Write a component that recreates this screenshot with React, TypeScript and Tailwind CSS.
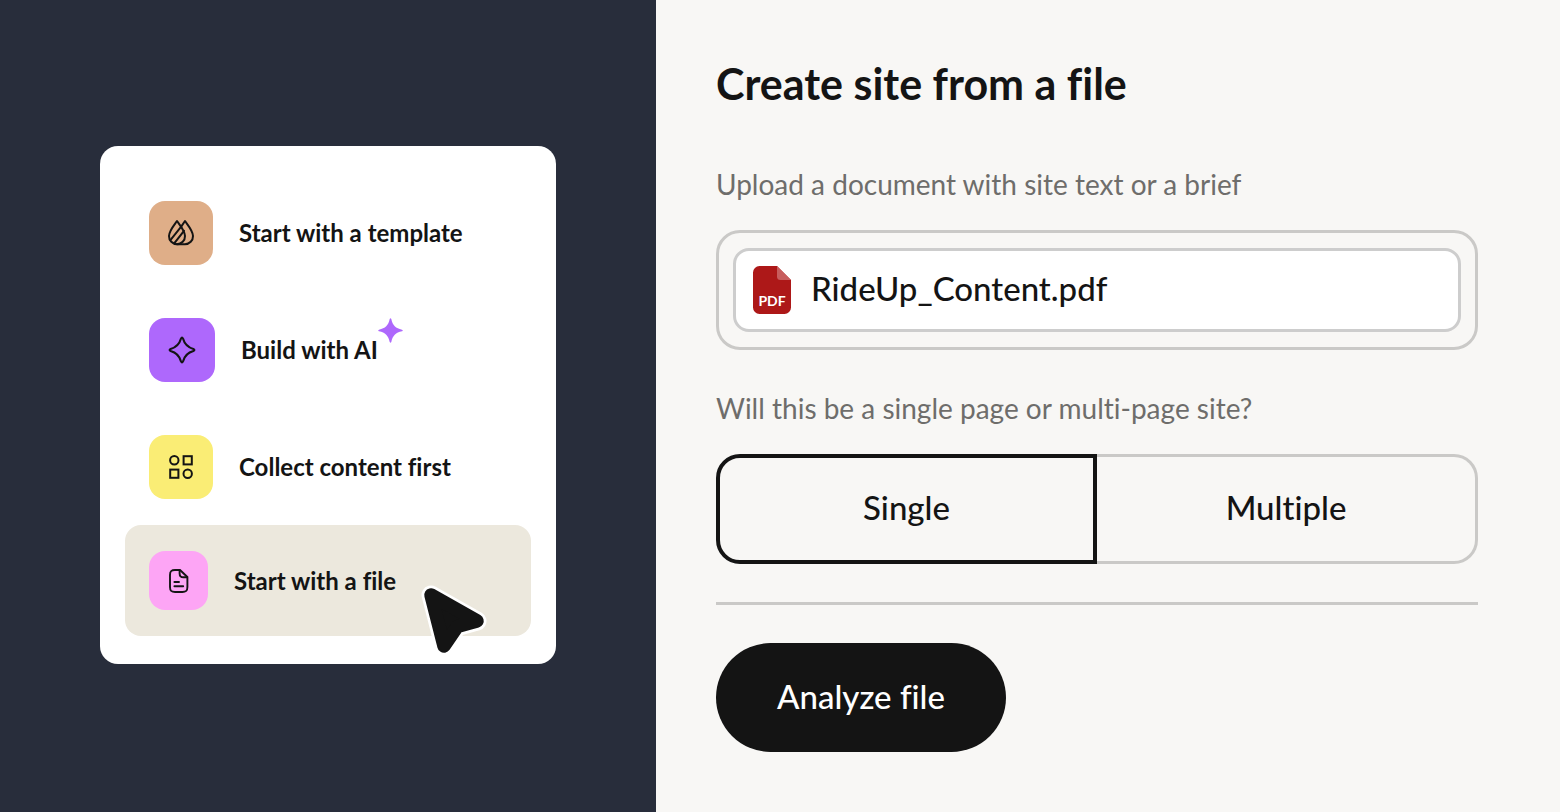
import { useState } from "react";
import type { ReactNode } from "react";

function DropsIcon() {
  return (
    <svg width="28" height="28" viewBox="0 0 28 28" fill="none" stroke="#141414" strokeWidth="2" strokeLinecap="round" strokeLinejoin="round" aria-hidden="true">
      <path d="M10 2 C7 6.2 2 12 2 17 A8 8 0 0 0 10 25.2 A8 8 0 0 0 18 17 C18 12 13 6.2 10 2 Z" />
      <path d="M14.2 7.6 L18 2 C21 6.2 26 12 26 17 A8 8 0 0 1 18 25.2 H10" />
      <path d="M3.6 20.8 L14 7.8" />
      <path d="M7.4 24.2 L17 11.8" />
    </svg>
  );
}

function SparkIcon() {
  return (
    <svg width="30" height="30" viewBox="0 0 30 30" fill="none" stroke="#141414" strokeWidth="2.1" strokeLinejoin="round" aria-hidden="true">
      <path d="M14 3.6 Q15 1.6 16 3.6 C17.6 9.5 20.5 12.4 26.4 14 Q28.4 15 26.4 16 C20.5 17.6 17.6 20.5 16 26.4 Q15 28.4 14 26.4 C12.4 20.5 9.5 17.6 3.6 16 Q1.6 15 3.6 14 C9.5 12.4 12.4 9.5 14 3.6 Z" />
    </svg>
  );
}

function ShapesIcon() {
  return (
    <svg width="26" height="26" viewBox="0 0 26 26" fill="none" stroke="#141414" strokeWidth="2" aria-hidden="true">
      <circle cx="6.3" cy="6.3" r="4.2" />
      <rect x="15.6" y="2.2" width="8.2" height="8.2" />
      <rect x="2.2" y="15.6" width="8.2" height="8.2" />
      <circle cx="19.7" cy="19.7" r="4.2" />
    </svg>
  );
}

function FileIcon() {
  return (
    <svg width="22" height="26" viewBox="0 0 22 26" fill="none" stroke="#141414" strokeWidth="1.9" strokeLinecap="round" strokeLinejoin="round" aria-hidden="true">
      <path d="M12 2 H7 C3 2 2 3.2 2 7 V19 C2 22.8 3 24 7 24 H14.4 C18.4 24 19.4 22.8 19.4 19 V9 Z" />
      <path d="M11.6 2.2 V5.5 C11.6 8.2 12.6 9.3 15.4 9.3 H19" />
      <path d="M6.4 14 H11" />
      <path d="M6.4 18.2 H15.2" />
    </svg>
  );
}

function Sparkle() {
  return (
    <svg className="absolute -top-4 left-full" width="25" height="25" viewBox="0 0 25 25" fill="#ae68fc" aria-hidden="true">
      <path d="M11.7 1 Q12.5 -.6 13.3 1 C14.6 7.3 17.7 10.4 24 11.7 Q25.6 12.5 24 13.3 C17.7 14.6 14.6 17.7 13.3 24 Q12.5 25.6 11.7 24 C10.4 17.7 7.3 14.6 1 13.3 Q-.6 12.5 1 11.7 C7.3 10.4 10.4 7.3 11.7 1 Z" />
    </svg>
  );
}

function Pointer() {
  return (
    <svg className="pointer-events-none absolute top-[59px] left-[295px]" width="68" height="74" viewBox="0 0 68 74" strokeLinejoin="round" aria-hidden="true">
      <path d="M11 11 L57 37 L39 42 Q37 42.6 36 44.5 L24 62 Z" fill="#fff" stroke="#fff" strokeWidth="19" />
      <path d="M11 11 L57 37 L39 42 Q37 42.6 36 44.5 L24 62 Z" fill="#141414" stroke="#141414" strokeWidth="13.5" />
    </svg>
  );
}

function PdfIcon() {
  return (
    <svg className="shrink-0" width="38" height="48" viewBox="0 0 38 48" aria-hidden="true">
      <path d="M6.5 0 H24 L38 14 V41.5 A6.5 6.5 0 0 1 31.5 48 H6.5 A6.5 6.5 0 0 1 0 41.5 V6.5 A6.5 6.5 0 0 1 6.5 0 Z" fill="#ad1818" />
      <path d="M24 0 L38 14 H27.5 A3.5 3.5 0 0 1 24 10.5 Z" fill="#c75d5d" />
      <text x="19" y="39.5" textAnchor="middle" fontFamily="Lato, sans-serif" fontSize="14" fontWeight="700" fill="#fff">
        PDF
      </text>
    </svg>
  );
}

const tile = "flex h-16 shrink-0 items-center justify-center rounded-2xl";
const option = "flex h-[117px] w-full cursor-pointer items-center gap-[26px] px-6 text-left";

function OptionLabel({ children }: { children: ReactNode }) {
  return <span className="relative whitespace-nowrap text-[24px] leading-8 font-bold">{children}</span>;
}

function StartMenu() {
  return (
    <nav aria-label="Ways to start" className="w-full rounded-[18px] bg-white px-[25px] py-7">
      <ul>
        <li>
          <button type="button" className={option}>
            <span className={`${tile} w-16 bg-[#dfae88]`}><DropsIcon /></span>
            <OptionLabel>Start with a template</OptionLabel>
          </button>
        </li>
        <li>
          <button type="button" className={option}>
            <span className={`${tile} w-[66px] bg-[#ae68fc]`}><SparkIcon /></span>
            <OptionLabel>Build with AI<Sparkle /></OptionLabel>
          </button>
        </li>
        <li>
          <button type="button" className={option}>
            <span className={`${tile} w-16 bg-[#faed75]`}><ShapesIcon /></span>
            <OptionLabel>Collect content first</OptionLabel>
          </button>
        </li>
        <li className="relative">
          <button type="button" aria-current="true" className="flex h-[111px] w-full cursor-pointer items-center gap-[26px] rounded-2xl bg-[#ece8dd] px-6 text-left">
            <span className="flex h-[59px] w-[59px] shrink-0 items-center justify-center rounded-2xl bg-[#fda5f5]"><FileIcon /></span>
            <OptionLabel>Start with a file</OptionLabel>
          </button>
          <Pointer />
        </li>
      </ul>
    </nav>
  );
}

export default function App() {
  const [fileName, setFileName] = useState("RideUp_Content.pdf");
  const [pages, setPages] = useState("Single");

  return (
    <div className="grid min-h-screen grid-cols-[656fr_904fr] bg-[#f8f7f5] font-['Lato',sans-serif] text-[#141414] [font-variant-ligatures:none]">
      <aside className="flex items-center bg-[#282d3b] px-[100px] pb-0.5">
        <StartMenu />
      </aside>

      <main className="pt-[58px] pr-[82px] pb-[60px] pl-[60px]">
        <h1 className="text-[43px] leading-[52px] font-bold">Create site from a file</h1>

        <form onSubmit={(e) => e.preventDefault()}>
          <label htmlFor="site-file" className="mt-14 block text-[28px] leading-9 text-[#6e6d6b]">
            Upload a document with site text or a brief
          </label>
          <label className="mt-7 block cursor-pointer rounded-3xl border-[3px] border-[#cac9c7] px-3.5 py-[15px]">
            <input
              id="site-file"
              type="file"
              className="sr-only"
              onChange={(e) => {
                const file = e.target.files?.[0];
                if (file) setFileName(file.name);
              }}
            />
            <span className="flex h-[84px] items-center gap-5 rounded-2xl border-[3px] border-[#cdcdcd] bg-white px-[17px]">
              <PdfIcon />
              <span className="pb-1 text-[33px] leading-10 font-medium">{fileName}</span>
            </span>
          </label>

          <fieldset>
            <legend className="pt-10 pb-7 text-[28px] leading-9 text-[#6e6d6b]">
              Will this be a single page or multi-page site?
            </legend>
            <div className="grid h-[110px] grid-cols-2 text-[33px] leading-10 font-medium">
              <label className="flex cursor-pointer items-center justify-center rounded-l-3xl border-[3px] border-r-0 border-[#cac9c7] pb-1 has-checked:border-4 has-checked:border-[#141414]">
                <input type="radio" name="pages" className="sr-only" checked={pages === "Single"} onChange={() => setPages("Single")} />
                Single
              </label>
              <label className="flex cursor-pointer items-center justify-center rounded-r-3xl border-[3px] border-l-0 border-[#cac9c7] pb-1 has-checked:border-4 has-checked:border-[#141414]">
                <input type="radio" name="pages" className="sr-only" checked={pages === "Multiple"} onChange={() => setPages("Multiple")} />
                Multiple
              </label>
            </div>
          </fieldset>

          <hr className="my-[38px] border-t-[3px] border-[#cac9c7]" />

          <button type="submit" className="h-[109px] w-[290px] cursor-pointer rounded-full bg-[#141414] pb-1 text-[33px] leading-10 font-medium text-white">
            Analyze file
          </button>
        </form>
      </main>
    </div>
  );
}
